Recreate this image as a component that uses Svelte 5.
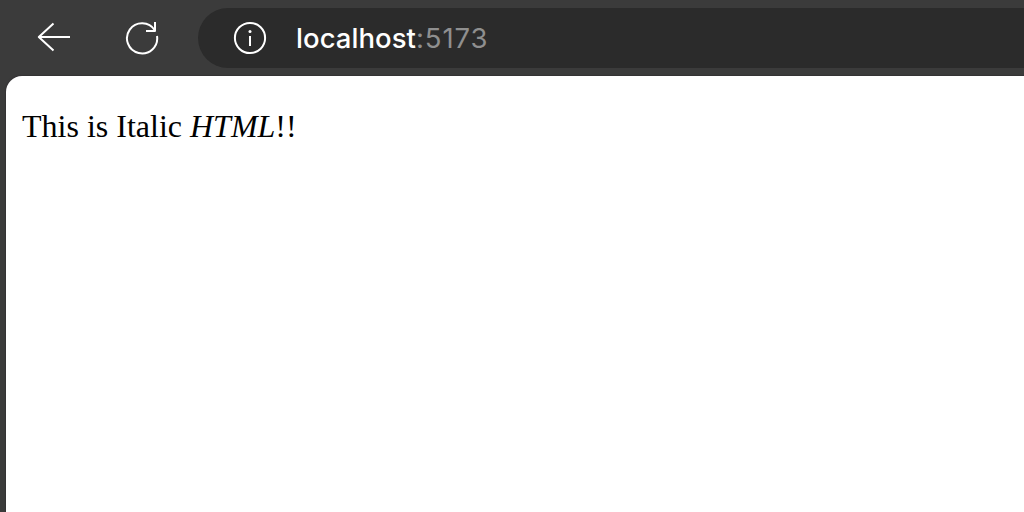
<script>
	let host = $state('localhost');
	let port = $state('5173');
</script>

<div class="browser">
	<header class="toolbar">
		<button type="button" aria-label="Back">
			<svg width="36" height="36" viewBox="0 0 36 36">
				<path d="M34 17H3M17.5 3.5L2.8 17l14.7 13.5" />
			</svg>
		</button>
		<button type="button" aria-label="Reload">
			<svg width="36" height="36" viewBox="0 0 36 36">
				<path d="M33 16A15.1 15.1 0 1 1 30.8 10.2M31 2v9h-9" />
			</svg>
		</button>
		<div class="address">
			<svg width="36" height="36" viewBox="0 0 36 36">
				<circle cx="18" cy="18" r="15.1" />
				<path d="M18 16v10" />
				<circle class="dot" cx="18" cy="11.5" r="1.5" />
			</svg>
			<span class="url">{host}<span class="port">:{port}</span></span>
		</div>
	</header>

	<main class="page">
		<p>This is Italic <em>HTML</em>!!</p>
	</main>
</div>

<style>
	:global(body) {
		background: #3b3b3b;
	}

	.browser {
		display: flex;
		flex-direction: column;
		height: 512px;
		overflow: hidden;
		background: #3b3b3b;
	}

	.toolbar {
		display: flex;
		align-items: center;
		height: 60px;
		padding: 8px 0 8px 36px;
	}

	button {
		display: flex;
		margin: 0 52px 0 0;
		padding: 0;
		border: 0;
		background: none;
	}

	button + button {
		margin-right: 38px;
	}

	svg {
		flex: none;
		fill: none;
		stroke: #ffffff;
		stroke-width: 2;
		stroke-linejoin: round;
	}

	.dot {
		fill: #ffffff;
		stroke: none;
	}

	.address {
		display: flex;
		flex: 1;
		align-items: center;
		gap: 28px;
		height: 60px;
		padding-left: 34px;
		border-radius: 30px 0 0 30px;
		background: #2b2b2b;
	}

	.url {
		color: #ffffff;
		font-family: Inter, sans-serif;
		font-size: 27.5px;
		font-weight: 500;
		letter-spacing: 0.05px;
		line-height: 60px;
	}

	.port {
		color: #8f8f8f;
		font-weight: 400;
		letter-spacing: 0.9px;
	}

	.page {
		flex: 1;
		margin-left: 6px;
		padding: 32px 16px;
		border-top-left-radius: 16px;
		background: #ffffff;
		box-shadow: 0 0 1px 1px #353335;
	}

	p {
		margin: 0;
		color: #000000;
		font-family: 'Liberation Serif', serif;
		font-size: 32px;
		line-height: 36px;
	}
</style>
